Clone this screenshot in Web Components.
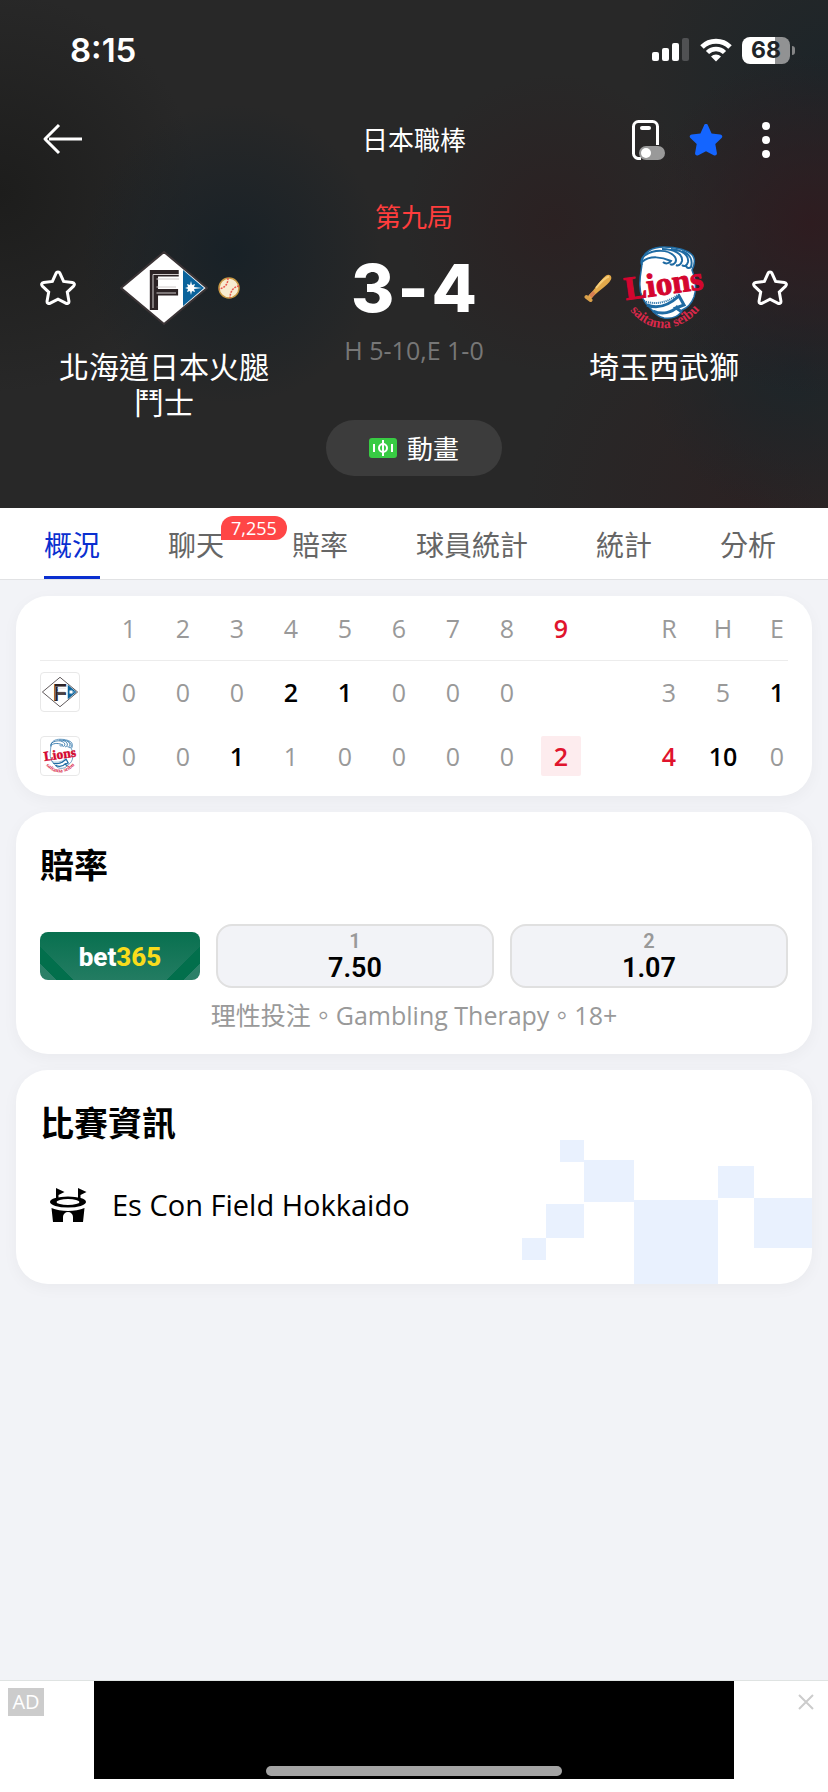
<!DOCTYPE html>
<html lang="zh-Hant">
<head>
<meta charset="utf-8">
<meta name="viewport" content="width=device-width, initial-scale=1">
<title>日本職棒</title>
<style>
  body {
    margin: 0;
    background: #f2f3f7;
    color: #000;
    font-family: "Open Sans", "Noto Sans CJK TC", sans-serif;
    font-size: 26px;
  }
</style>
</head>
<body>
<score-app></score-app>

<script>
// Small helper: every element here is a shadow root filled with static markup
class BaseElement extends HTMLElement {
  constructor() {
    super();
    this.attachShadow({ mode: 'open' });
  }

  connectedCallback() {
    this.shadowRoot.innerHTML = `
      <style>
        * { box-sizing: border-box; }
        button {
          border: 0;
          padding: 0;
          margin: 0;
          background: none;
          color: inherit;
          font: inherit;
          cursor: pointer;
        }
        svg { display: block; }
      </style>
      ${this.render()}
    `;
  }

  render() {
    return '<slot></slot>';
  }
}

const STAR = 'M18 3c1 0 1.700.5 2 1.400l3.600 8 8.700 1c2 .3 2.700 2.300 1.300 3.700l-6.300 6 1.600 9c.3 2-1.500 3-3.200 2.100L18 30.200l-7.700 4c-1.700.9-3.500-.1-3.200-2.100l1.600-9-6.300-6C1 15.700 1.700 13.700 3.700 13.400l8.700-1 3.600-8C16.300 3.500 17 3 18 3z';

// Team emblems
const LOGOS = {
  fighters: `
    <svg viewBox="0 0 88 88" width="100%" height="100%" aria-hidden="true">
      <path d="M1 44 44 8l43 36-43 36z" fill="#fff" stroke="#3b3436" stroke-width="2"/>
      <path d="M63 26v36l21-18z" fill="#0a639c"/>
      <text x="26" y="66" font-family="Liberation Sans, sans-serif" font-weight="700" font-size="57" fill="#2b2224">F</text>
      <path d="M33 64V30.500H59M36.500 43H56M36.500 49H56M36.500 35H59" fill="none" stroke="#cfcaca" stroke-width="1"/>
      <path d="m71 37 1 4 3-1-1 3 8 1-8 1 1 3-3-1-1 4-1-4-3 1 1-3-3-1 3-1-1-3 3 1z" fill="#fff"/>
    </svg>`,
  lions: `
    <svg viewBox="0 0 88 88" width="100%" height="100%" aria-hidden="true">
      <path d="M22 18C23 8 32 3 44 3c12 0 25 3 29 9 3 5 1 10-1 14 3 8 5 18 2 27-3 8-7 11-12 13-2 6-9 9-18 8-6-1-9-4-13-9-8-7-12-17-11-28 0-7 2-12 2-19z" fill="#fff" stroke="#1f6ba3" stroke-width="1.500"/>
      <path d="M22 18c8-7 20-5 29-1-2 3-6 3-8 1M24 12c10-7 25-7 31 1 3 5-2 9-5 7M42 5c12 0 21 5 20 12-1 4-4 5-6 4M51 5c11 1 18 6 17 13-1 4-4 5-6 3M62 7c8 3 11 9 9 16-2 2-4 1-5-1M24 12c-3 3-3 7-2 9" fill="none" stroke="#1f6ba3" stroke-width="2"/>
      <path d="M27 61c10 4 21 1 32-9l5 9-8 3 6 4M33 67c9 4 19 2 25-5" fill="none" stroke="#1f6ba3" stroke-width="3"/>
      <path d="M24 57c13 5 26 0 35-7" fill="none" stroke="#1f6ba3" stroke-width="2" stroke-dasharray="1 1"/>
      <text x="6" y="56" transform="rotate(-8 6 56)" font-family="Liberation Serif, serif" font-weight="700" font-size="33" fill="#d4052f" stroke="#d4052f" stroke-width="1">Lions</text>
      <path id="arc" d="M8 64Q23 84 44 84 67 84 84 60" fill="none"/>
      <text font-family="Liberation Serif, serif" font-weight="700" font-size="14" fill="#d8284a"><textPath href="#arc" startOffset="3">saitama seibu</textPath></text>
    </svg>`
};

class TeamLogo extends BaseElement {
  render() {
    return `
      <style>:host { display: block; width: 88px; height: 88px; }</style>
      ${LOGOS[this.getAttribute('team')]}
    `;
  }
}
customElements.define('team-logo', TeamLogo);

// Phone status bar: clock, signal, wifi, battery
class StatusBar extends BaseElement {
  render() {
    return `
      <style>
        :host {
          display: flex;
          align-items: center;
          justify-content: space-between;
          height: 100px;
          padding: 0 33px 0 70px;
          font-family: Inter, sans-serif;
        }
        time { font-size: 33px; font-weight: 600; }
        .icons { display: flex; align-items: center; gap: 10px; }
        .battery { display: flex; align-items: center; gap: 2px; }
        .level {
          width: 48px;
          height: 27px;
          border-radius: 8px;
          background: linear-gradient(90deg, #fff 69%, #919293 69%);
          color: #202428;
          font-size: 23px;
          font-weight: 700;
          line-height: 27px;
          text-align: center;
        }
        .nub { width: 3px; height: 9px; border-radius: 0 4px 4px 0; background: #848586; }
      </style>
      <time>8:15</time>
      <div class="icons">
        <svg width="38" height="24" viewBox="0 0 38 24" fill="#fff" aria-hidden="true">
          <rect y="14" width="7" height="9" rx="2"/>
          <rect x="10" y="10" width="7" height="13" rx="2"/>
          <rect x="20" y="5" width="7" height="18" rx="2"/>
          <rect x="30" width="7" height="23" rx="2" fill="#505153"/>
        </svg>
        <svg width="32" height="24" viewBox="0 0 32 24" aria-hidden="true">
          <path d="M2 9a20 20 0 0 1 28 0" fill="none" stroke="#fff" stroke-width="5"/>
          <path d="M7.500 14.500a12 12 0 0 1 17 0" fill="none" stroke="#fff" stroke-width="4.500"/>
          <path d="M11 18.500a7 7 0 0 1 10 0l-5 5z" fill="#fff"/>
        </svg>
        <div class="battery"><div class="level">68</div><div class="nub"></div></div>
      </div>
    `;
  }
}
customElements.define('status-bar', StatusBar);

// Top navigation
class NavBar extends BaseElement {
  render() {
    return `
      <style>
        :host {
          display: grid;
          grid-template-columns: 1fr auto 1fr;
          align-items: center;
          height: 80px;
          padding: 0 42px;
        }
        h1 { margin: 0; font-size: 26px; font-weight: 400; line-height: 36px; }
        .back { justify-self: start; }
        .actions { display: flex; justify-content: flex-end; align-items: center; gap: 22px; }
        .actions button:last-child { padding: 0 16px; }
      </style>
      <button class="back" aria-label="返回">
        <svg width="42" height="34" viewBox="0 0 42 34" fill="none" stroke="#fff" stroke-width="3">
          <path d="M17 2 3 16l14 14M7 16h33" stroke-linejoin="round"/>
        </svg>
      </button>
      <h1><slot></slot></h1>
      <div class="actions">
        <button aria-label="懸浮比分">
          <svg width="34" height="40" viewBox="0 0 34 40">
            <path d="M9 38.500H7A5 5 0 0 1 1.500 33.500V6.500a5 5 0 0 1 5-5h14a5 5 0 0 1 5 5V25" fill="none" stroke="#fff" stroke-width="3"/>
            <rect x="8" y="6" width="11" height="4" rx="2" fill="#fff"/>
            <rect x="7" y="26" width="26" height="14" rx="7" fill="#999"/>
            <circle cx="14" cy="33" r="5" fill="#fff"/>
          </svg>
        </button>
        <button aria-label="收藏">
          <svg width="36" height="38" viewBox="0 0 36 38"><path d="${STAR}" fill="#1465ff"/></svg>
        </button>
        <button aria-label="更多">
          <svg width="8" height="36" viewBox="0 0 8 36" fill="#fff" overflow="visible">
            <circle cx="4" cy="4" r="4"/><circle cx="4" cy="18" r="4"/><circle cx="4" cy="32" r="4"/>
          </svg>
        </button>
      </div>
    `;
  }
}
customElements.define('nav-bar', NavBar);

// One side of the match header, side="right" mirrors the row
class TeamSide extends BaseElement {
  render() {
    const right = this.getAttribute('side') === 'right';
    const star = `
      <button aria-label="關注球隊">
        <svg width="36" height="38" viewBox="0 0 36 38"><path d="${STAR}" fill="none" stroke="#fff" stroke-width="3"/></svg>
      </button>`;
    const ball = `
      <svg class="mark" width="22" height="22" viewBox="0 0 22 22" aria-hidden="true">
        <circle cx="11" cy="11" r="10" fill="#f8ecd0" stroke="#c99a45" stroke-width="1.500"/>
        <path d="M10 1c0 6-3 10-9 11M21 9c-6 1-9 6-9 12" fill="none" stroke="#e8584f" stroke-width="1.500" stroke-dasharray="2 1"/>
      </svg>`;
    const bat = `
      <svg class="mark" width="28" height="30" viewBox="0 0 28 30" aria-hidden="true">
        <path d="m2.500 24 4 3" stroke="#d9a04a" stroke-width="4" stroke-linecap="round"/>
        <path d="M4 23C11 17 15 8 22 2.500c3-2 6.500.5 5 4C23 14 13 18 7 26z" fill="#e3a94a"/>
        <path d="m5 22 4-4 2.500 2.500L8 25z" fill="#d77e52"/>
        <path d="M12 15C17 9 20 5 25 3.500" fill="none" stroke="#f6cd78" stroke-width="2"/>
      </svg>`;
    return `
      <style>
        :host { display: block; padding-top: 64px; }
        .row {
          display: grid;
          grid-template-columns: 1fr 88px 1fr;
          align-items: center;
        }
        .row > :first-child { justify-self: ${right ? 'end' : 'center'}; }
        .row > :last-child { justify-self: ${right ? 'center' : 'start'}; }
        .row button { padding: ${right ? '0 0 0 4px' : '0 4px 0 0'}; }
        .mark { margin: 0 ${right ? '8px' : '10px'}; }
        h2 {
          max-width: 220px;
          margin: 17px auto 0;
          font-size: 30px;
          font-weight: 400;
          line-height: 36px;
          text-align: center;
        }
      </style>
      <div class="row">
        ${right ? bat : star}
        <team-logo team="${this.getAttribute('team')}"></team-logo>
        ${right ? star : ball}
      </div>
      <h2><slot></slot></h2>
    `;
  }
}
customElements.define('team-side', TeamSide);

// Inning, score and the animation button
class MatchScore extends BaseElement {
  render() {
    return `
      <style>
        :host { display: flex; flex-direction: column; align-items: center; padding-top: 22px; }
        .inning { color: #ff3d3d; font-size: 26px; line-height: 30px; }
        .score {
          display: flex;
          gap: 3px;
          margin-top: 24px;
          font-family: Inter, sans-serif;
          font-size: 66px;
          font-weight: 800;
          line-height: 64px;
        }
        .hits { margin-top: 15px; color: #777; font-size: 25px; line-height: 30px; white-space: nowrap; }
        button {
          display: flex;
          align-items: center;
          justify-content: center;
          gap: 10px;
          width: 176px;
          height: 56px;
          margin-top: 55px;
          border-radius: 28px;
          background: #3c3c3c;
          font-size: 26px;
        }
      </style>
      <div class="inning">第九局</div>
      <div class="score"><span>3</span><span>-</span><span>4</span></div>
      <div class="hits">H 5-10,E 1-0</div>
      <button>
        <svg width="28" height="20" viewBox="0 0 28 20" aria-hidden="true">
          <rect width="28" height="20" rx="3" fill="#38cb43"/>
          <path d="M5 6v8M23 6v8M14 2v16" stroke="#fff" stroke-width="2"/>
          <circle cx="14" cy="10" r="4" fill="none" stroke="#fff" stroke-width="2"/>
        </svg>
        動畫
      </button>
    `;
  }
}
customElements.define('match-score', MatchScore);

class MatchHeader extends BaseElement {
  render() {
    return `
      <style>
        :host {
          display: block;
          padding-bottom: 32px;
          color: #fff;
          background:
            radial-gradient(circle at 28% 50%, #182127 0, transparent 150px),
            radial-gradient(circle at 0 38%, #1d1d1c 0, transparent 200px),
            radial-gradient(circle at 98% 44%, #2e1c20 0, transparent 170px),
            radial-gradient(circle at 67% 44%, #2b2122 0, transparent 150px),
            radial-gradient(circle at 96% 72%, #1d2529 0, transparent 150px),
            radial-gradient(circle at 100% 14%, #1d2529 0, transparent 190px),
            radial-gradient(circle at 90% 100%, #2b2223 0, transparent 220px),
            #282828;
        }
        .match { display: grid; grid-template-columns: 1fr 172px 1fr; align-items: start; }
      </style>
      <status-bar></status-bar>
      <nav-bar>日本職棒</nav-bar>
      <div class="match">
        <team-side team="fighters">北海道日本火腿鬥士</team-side>
        <match-score></match-score>
        <team-side team="lions" side="right">埼玉西武獅</team-side>
      </div>
    `;
  }
}
customElements.define('match-header', MatchHeader);

// Tabs
class TabItem extends BaseElement {
  render() {
    const badge = this.getAttribute('badge');
    return `
      <style>
        :host { display: block; position: relative; }
        button { height: 71px; padding-top: 3px; color: #666; font-size: 28px; border-bottom: 3px solid transparent; white-space: nowrap; }
        :host([selected]) button { color: #0a2fd0; border-color: #0a2fd0; }
        .badge {
          position: absolute;
          top: 8px;
          left: 53px;
          padding: 0 10px;
          border-radius: 12px 12px 12px 0;
          background: #ff4646;
          color: #fff;
          font-size: 18px;
          line-height: 24px;
        }
      </style>
      <button role="tab" aria-selected="${this.hasAttribute('selected')}"><slot></slot></button>
      ${badge ? `<span class="badge">${badge}</span>` : ''}
    `;
  }
}
customElements.define('tab-item', TabItem);

class TabBar extends BaseElement {
  render() {
    return `
      <style>
        :host {
          display: flex;
          justify-content: space-between;
          padding: 0 52px 0 44px;
          background: #fff;
          border-bottom: 1px solid #e1e2e4;
        }
      </style>
      <slot></slot>
    `;
  }
}
customElements.define('tab-bar', TabBar);

// White rounded card with an optional heading
class InfoCard extends BaseElement {
  render() {
    const heading = this.getAttribute('heading');
    return `
      <style>
        :host {
          display: block;
          position: relative;
          overflow: hidden;
          padding: 0 24px;
          border-radius: 32px;
          background: #fff;
          box-shadow: 0 4px 16px rgba(0, 0, 20, 0.04);
        }
        h2 { margin: 31px 0 37px; font-size: 34px; font-weight: 700; line-height: 44px; }
      </style>
      ${heading ? `<h2>${heading}</h2>` : ''}
      <slot></slot>
    `;
  }
}
customElements.define('info-card', InfoCard);

// Runs per inning
class LineScore extends BaseElement {
  render() {
    const heads = ['1', '2', '3', '4', '5', '6', '7', '8', '*9', '', 'R', 'H', 'E'];
    const rows = [
      ['fighters', '0', '0', '0', '!2', '!1', '0', '0', '0', '', '', '3', '5', '!1'],
      ['lions', '0', '0', '!1', '1', '0', '0', '0', '0', '#2', '', '*4', '!10', '0']
    ];
    // leading mark: ! strong, * live, # live with a tinted box
    const kinds = { '!': 'strong', '*': 'live', '#': 'live box' };
    const cell = (text, tag) => {
      const kind = kinds[text[0]];
      return `<${tag} class="${kind || ''}"><span>${kind ? text.slice(1) : text}</span></${tag}>`;
    };
    return `
      <style>
        :host { display: block; padding-bottom: 8px; }
        table { width: 100%; table-layout: fixed; border-collapse: collapse; color: #999; font-size: 25px; }
        th, td { height: 64px; padding: 0; font-weight: 400; text-align: center; }
        th:first-child { width: 62px; }
        th:last-child { width: 38px; }
        th:last-child, td:last-child { padding-left: 16px; }
        thead th { border-bottom: 1px solid #ececec; }
        span { display: block; line-height: 40px; }
        .strong { color: #000; font-weight: 600; }
        .live { color: #e0142d; font-weight: 600; }
        .box span { width: 40px; margin: 0 auto; border-radius: 2px; background: #fdecee; }
        team-logo { width: 40px; height: 40px; padding: 1px; border: 1px solid #e8e8e8; border-radius: 4px; box-sizing: border-box; }
      </style>
      <table>
        <thead><tr><th></th>${heads.map((h) => cell(h, 'th')).join('')}</tr></thead>
        <tbody>
          ${rows.map(([team, ...runs]) => `
            <tr>
              <td><team-logo team="${team}"></team-logo></td>
              ${runs.map((r) => cell(r, 'td')).join('')}
            </tr>`).join('')}
        </tbody>
      </table>
    `;
  }
}
customElements.define('line-score', LineScore);

class OddsButton extends BaseElement {
  render() {
    return `
      <style>
        :host { display: block; flex: 1; }
        button {
          display: flex;
          flex-direction: column;
          align-items: center;
          justify-content: center;
          width: 100%;
          height: 64px;
          border: 2px solid #e0e0e0;
          border-radius: 16px;
          background: #f2f3f7;
          font-family: Roboto, sans-serif;
          font-size: 27px;
          font-weight: 600;
          line-height: 30px;
        }
        small { color: #999; font-size: 20px; line-height: 24px; }
      </style>
      <button><small>${this.getAttribute('pick')}</small><span><slot></slot></span></button>
    `;
  }
}
customElements.define('odds-button', OddsButton);

class OddsPanel extends BaseElement {
  render() {
    return `
      <style>
        :host { display: block; padding-bottom: 21px; }
        .row { display: flex; align-items: center; gap: 16px; }
        .brand {
          flex: none;
          width: 160px;
          height: 48px;
          border-radius: 8px;
          background:
            linear-gradient(45deg, #2c8068 12px, #026f4c 12px, #026f4c 24px, transparent 24px),
            linear-gradient(-45deg, #2c8068 12px, #026f4c 12px, #026f4c 24px, transparent 24px),
            linear-gradient(#08704f, #237c62);
          color: #fff;
          font-family: Roboto, sans-serif;
          font-size: 26px;
          font-weight: 800;
          line-height: 50px;
          text-align: center;
          text-decoration: none;
        }
        .brand b { color: #f9dc1c; font-weight: 800; }
        p { margin: 9px 0 0; color: #999; font-size: 25px; line-height: 36px; text-align: center; }
      </style>
      <div class="row">
        <a class="brand" href="#odds">bet<b>365</b></a>
        <odds-button pick="1">7.50</odds-button>
        <odds-button pick="2">1.07</odds-button>
      </div>
      <p>理性投注。Gambling Therapy。18+</p>
    `;
  }
}
customElements.define('odds-panel', OddsPanel);

class VenueInfo extends BaseElement {
  render() {
    return `
      <style>
        :host { display: block; padding-bottom: 56px; }
        .venue { display: flex; align-items: center; gap: 24px; padding-left: 8px; font-size: 29px; font-weight: 500; line-height: 46px; }
        .pixels { position: absolute; right: 0; bottom: 0; }
      </style>
      <svg class="pixels" width="290" height="144" viewBox="522 1140 290 144" fill="#e9f1fe" aria-hidden="true">
        <path d="M560 1140h24v22h-24zM584 1160h50v42h-50zM634 1200h84v84h-84zM718 1166h36v32h-36zM754 1198h58v50h-58zM546 1204h38v34h-38zM522 1238h24v22h-24z"/>
      </svg>
      <div class="venue">
        <svg width="40" height="36" viewBox="0 0 40 36" aria-hidden="true">
          <path d="M8 12V1l8.500 4-6 3v4zM30 12V1l8.500 4-6 3v4z"/>
          <path fill-rule="evenodd" d="M2 15a18 5.500 0 1 0 36 0 18 5.500 0 1 0-36 0zM8.500 15a11.500 3 0 1 0 23 0 11.500 3 0 1 0-23 0z"/>
          <path d="M3.500 21c9 4 24 4 33 0L35 35H25v-5a5 5 0 0 0-10 0v5H5z"/>
        </svg>
        <slot></slot>
      </div>
    `;
  }
}
customElements.define('venue-info', VenueInfo);

// Advert strip at the bottom
class AdBanner extends BaseElement {
  render() {
    return `
      <style>
        :host {
          display: flex;
          justify-content: space-between;
          align-items: flex-start;
          position: relative;
          height: 112px;
          padding: 0 14px 0 8px;
          background: #fff;
          border-top: 1px solid #dfe3e2;
        }
        .tag { margin-top: 7px; width: 36px; background: #ccc; color: #fff; font-size: 20px; line-height: 28px; text-align: center; }
        button { margin-top: 13px; }
        .advert { position: absolute; top: 0; left: 94px; right: 94px; height: 98px; background: #000; }
        .home { position: absolute; left: 50%; bottom: 16px; width: 296px; height: 10px; margin-left: -148px; border-radius: 5px; background: #a4a4a4; }
      </style>
      <span class="tag">AD</span>
      <button aria-label="關閉廣告">
        <svg width="16" height="16" viewBox="0 0 16 16" stroke="#ccc" stroke-width="2"><path d="m1 1 14 14M15 1 1 15"/></svg>
      </button>
      <div class="advert"></div>
      <div class="home"></div>
    `;
  }
}
customElements.define('ad-banner', AdBanner);

class ScoreApp extends BaseElement {
  render() {
    return `
      <style>
        :host { display: flex; flex-direction: column; min-height: 100vh; }
        main { display: flex; flex-direction: column; gap: 16px; flex: 1; padding: 16px; }
      </style>
      <match-header></match-header>
      <tab-bar role="tablist">
        <tab-item selected>概況</tab-item>
        <tab-item badge="7,255">聊天</tab-item>
        <tab-item>賠率</tab-item>
        <tab-item>球員統計</tab-item>
        <tab-item>統計</tab-item>
        <tab-item>分析</tab-item>
      </tab-bar>
      <main>
        <info-card><line-score></line-score></info-card>
        <info-card heading="賠率"><odds-panel></odds-panel></info-card>
        <info-card heading="比賽資訊"><venue-info>Es Con Field Hokkaido</venue-info></info-card>
      </main>
      <ad-banner></ad-banner>
    `;
  }
}
customElements.define('score-app', ScoreApp);
</script>
</body>
</html>
